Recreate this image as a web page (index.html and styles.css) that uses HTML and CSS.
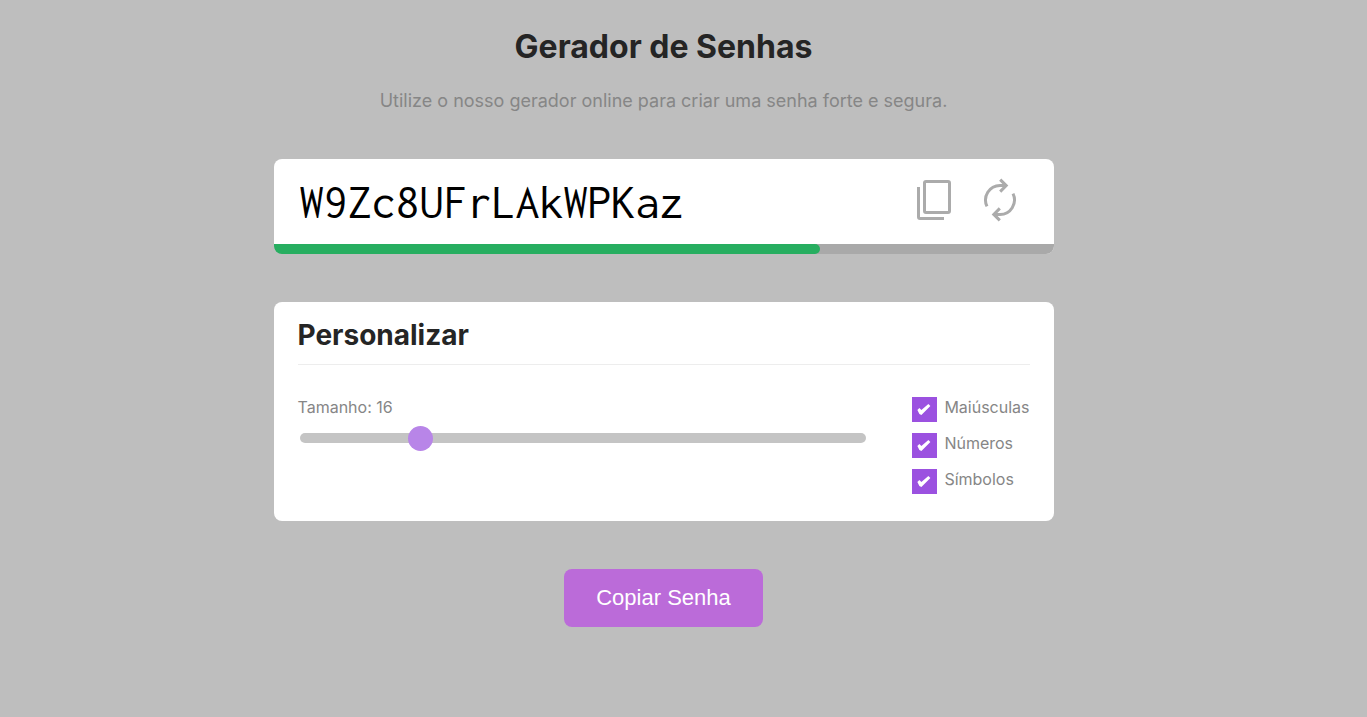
FILE: index.html
```html
<!DOCTYPE html>
<html lang="pt-BR">
<head>
<meta charset="utf-8">
<meta name="viewport" content="width=device-width, initial-scale=1">
<title>Gerador de Senhas</title>
<link rel="stylesheet" href="styles.css">
</head>
<body>
<main class="container">
  <header class="intro">
    <h1 class="title">Gerador de Senhas</h1>
    <p class="subtitle">Utilize o nosso gerador online para criar uma senha forte e segura.</p>
  </header>

  <section class="password">
    <div class="password-row">
      <input class="password-text" type="text" value="W9Zc8UFrLAkWPKaz" aria-label="Senha" spellcheck="false" readonly>
      <div class="password-actions">
        <button class="icon-button" type="button" aria-label="Copiar">
          <svg class="icon" viewBox="0 0 48 48"><rect x="13.500" y="5.500" width="25" height="31" rx="1.500"/><path d="M7.500 11v30q0 1.500 1.500 1.500h24"/></svg>
        </button>
        <button class="icon-button" type="button" aria-label="Gerar nova senha">
          <svg class="icon" viewBox="0 0 48 48"><path d="M11 30.300A14.500 14.500 0 0 1 24 9.500h6M24.200 3.600l6 6-6 6M37 17.700A14.500 14.500 0 0 1 24 38.500h-6M23.800 44.400l-6-6 6-6"/></svg>
        </button>
      </div>
    </div>
    <div class="strength"><div class="strength-bar" style="width: 70%"></div></div>
  </section>

  <section class="customize">
    <h2 class="customize-title">Personalizar</h2>
    <div class="options">
      <div class="size">
        <label class="size-label" for="length">Tamanho: 16</label>
        <input class="slider" id="length" type="range" min="4" max="64" value="16">
      </div>
      <div class="checks">
        <div class="check"><input class="checkbox" type="checkbox" id="upper" checked><label class="check-label" for="upper">Maiúsculas</label></div>
        <div class="check"><input class="checkbox" type="checkbox" id="numbers" checked><label class="check-label" for="numbers">Números</label></div>
        <div class="check"><input class="checkbox" type="checkbox" id="symbols" checked><label class="check-label" for="symbols">Símbolos</label></div>
      </div>
    </div>
  </section>

  <button class="submit" type="button">Copiar Senha</button>
</main>
</body>
</html>
```
FILE: styles.css
```css
* {
  box-sizing: border-box;
  margin: 0;
  padding: 0;
}

body {
  padding: 24px 40px 24px 0;
  background: #bebebe;
  color: #868686;
  font-family: Inter, "Liberation Sans", sans-serif;
  font-size: 16px;
}

.container {
  display: flex;
  flex-direction: column;
  align-items: center;
  gap: 48px;
  width: 100%;
  max-width: 780px;
  margin: 0 auto;
}

.intro {
  display: flex;
  flex-direction: column;
  gap: 22px;
  text-align: center;
}

.title {
  color: #252525;
  font-size: 32px;
  line-height: 45px;
}

.subtitle {
  font-size: 18px;
  line-height: 20px;
}

.password,
.customize {
  width: 100%;
  border-radius: 8px;
  background: #fff;
  overflow: hidden;
}

.password-row {
  display: flex;
  align-items: center;
  gap: 16px;
  height: 85px;
  padding: 0 30px 0 24px;
}

.password-text {
  flex: 1;
  min-width: 0;
  padding: 2px;
  border: 0;
  outline: 0;
  background: transparent;
  color: #000;
  font-family: Inconsolata, "DejaVu Sans Mono", monospace;
  font-size: 48px;
}

.password-actions {
  display: flex;
  gap: 17px;
  padding-bottom: 3px;
}

.icon-button {
  display: flex;
  border: 0;
  background: none;
  cursor: pointer;
}

.icon {
  width: 48px;
  height: 48px;
  fill: none;
  stroke: #ababab;
  stroke-width: 3;
}

.strength {
  height: 10px;
  background: #a9a9a9;
}

.strength-bar {
  height: 100%;
  border-radius: 5px;
  border-top-left-radius: 0;
  background: #27ae60;
}

.customize {
  padding: 12px 24px 27px;
}

.customize-title {
  padding-bottom: 8px;
  border-bottom: 1px solid #ededed;
  color: #252525;
  font-size: 28px;
  line-height: 42px;
}

.options {
  display: flex;
  gap: 44px;
  padding-top: 32px;
}

.size {
  flex: 1;
}

.size-label {
  display: block;
  line-height: 20px;
}

.slider {
  display: block;
  width: calc(100% - 4px);
  height: 10px;
  margin: 16px 2px 0;
  border-radius: 5px;
  appearance: none;
  background: #c4c4c4;
  cursor: pointer;
}

.slider::-webkit-slider-thumb {
  width: 25px;
  height: 25px;
  border-radius: 50%;
  appearance: none;
  background: #b885e8;
}

.checks {
  display: flex;
  flex-direction: column;
  gap: 11px;
}

.check {
  display: flex;
  gap: 7px;
}

.checkbox {
  width: 25px;
  height: 25px;
  appearance: none;
  background: #9b51e0;
  cursor: pointer;
}

.checkbox:checked::before {
  content: "";
  display: block;
  width: 25px;
  height: 25px;
  background: #fff;
  clip-path: polygon(5px 13px, 7px 11px, 9px 13px, 16px 7px, 18px 9px, 9px 18px, 7px 17px);
}

.check-label {
  line-height: 21px;
}

.submit {
  padding: 16px 32px;
  border: 0;
  border-radius: 8px;
  background: #bb6bd9;
  color: #fff;
  font-family: "Liberation Sans", Arial, sans-serif;
  font-size: 22px;
  line-height: 26px;
  cursor: pointer;
}
```
